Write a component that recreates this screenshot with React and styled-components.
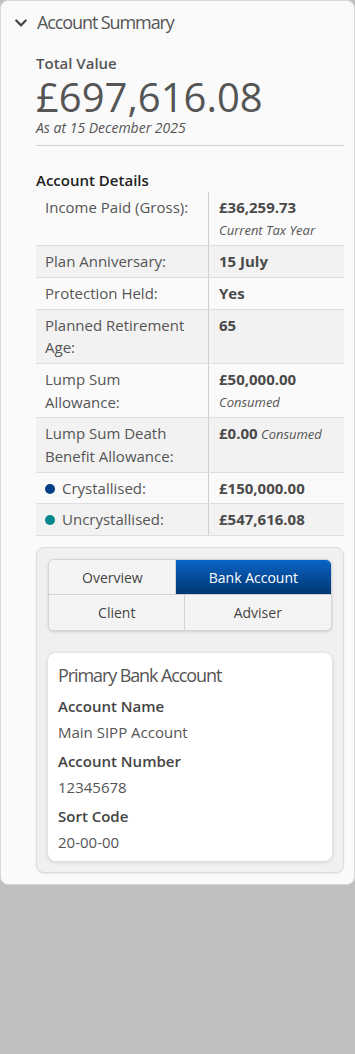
import React, { useState } from "react";
import styled, { createGlobalStyle } from "styled-components";
import { FaChevronDown } from "react-icons/fa";

const GlobalStyle = createGlobalStyle`
  body {
    margin: 0;
    background-color: #c0c0c0;
    font-family: "Open Sans", "Liberation Sans", sans-serif;
    color: #555;
  }
  * {
    box-sizing: border-box;
  }
`;

const Panel = styled.section`
  background-color: #fafafa;
  border: 1px solid #d8d8d8;
  border-radius: 8px;
`;

const Header = styled.div`
  display: flex;
  align-items: center;
  gap: 9px;
  height: 43px;
  padding-left: 13px;
  color: #444;
`;

const Title = styled.h2`
  margin: 0 0 2px;
  font-size: 18px;
  font-weight: 400;
  letter-spacing: -1.1px;
  color: #555;
`;

const Body = styled.div`
  padding: 9px 10px 11px 35px;
`;

const SectionLabel = styled.div`
  font-size: 15px;
  font-weight: 600;
  line-height: ${(p) => p.$lh || 20}px;
  color: ${(p) => p.$color || "#555"};
  margin-top: ${(p) => p.$gap || 0}px;
`;

const BigValue = styled.div`
  margin-top: 1px;
  font-size: 40px;
  font-weight: 400;
  line-height: 46px;
  color: #555;
`;

const AsAt = styled.div`
  font-size: 14px;
  font-style: italic;
  line-height: 16px;
  color: #555;
`;

const Divider = styled.hr`
  margin: 9px 0 0;
  border: none;
  border-top: 1px solid #cfcfcf;
`;

const DetailsTable = styled.div`
  display: flex;
  flex-direction: column;
  border-bottom: 1px solid #dedede;
`;

const Row = styled.div`
  display: grid;
  grid-template-columns: 173px 1fr;
  background-color: ${(p) => (p.$striped ? "#f2f2f2" : "transparent")};
  border-top: ${(p) => (p.$first ? "none" : "1px solid #dedede")};
  font-size: 15px;
  line-height: 22.65px;
`;

const LabelCell = styled.div`
  display: flex;
  align-items: flex-start;
  gap: 7px;
  padding: 4px 18px 4px 9px;
  border-right: 1px solid #cfcfcf;
  color: #555;
`;

const ValueCell = styled.div`
  padding: 4px 10px;
  font-weight: 700;
  color: #4a4a4a;
`;

const Note = styled.span`
  display: ${(p) => (p.$block ? "block" : "inline")};
  font-size: 13px;
  font-weight: 400;
  font-style: italic;
  line-height: 22.65px;
  color: #555;
`;

const Dot = styled.span`
  flex: none;
  width: 10px;
  height: 10px;
  margin-top: 7px;
  border-radius: 50%;
  background-color: ${(p) => p.$color};
`;

const TabsPanel = styled.div`
  margin-top: 11px;
  padding: 11px;
  background-color: #f0f0f0;
  border: 1px solid #dcdcdc;
  border-radius: 8px;
  box-shadow: 0 1px 2px rgba(0, 0, 0, 0.08);
`;

const TabGroup = styled.div`
  display: flex;
  flex-wrap: wrap;
  overflow: hidden;
  background-color: #f4f4f4;
  border: 1px solid #d4d4d4;
  border-radius: 6px;
  box-shadow: 0 1px 3px rgba(0, 0, 0, 0.14);
`;

const Tab = styled.button`
  flex: 1 1 auto;
  height: 36px;
  margin: -1px 0 0 -1px;
  padding: 0 30px;
  border: none;
  border-left: 1px solid #d2d2d2;
  border-top: 1px solid #d2d2d2;
  font-family: inherit;
  font-size: 14px;
  color: ${(p) => (p.$active ? "#fff" : "#444")};
  background: ${(p) =>
    p.$active ? "linear-gradient(#0a64c6, #00346f)" : "#f4f4f4"};
  cursor: pointer;
`;

const BankCard = styled.div`
  margin-top: 22px;
  padding: 9px 10px 8px;
  background-color: #fff;
  border-radius: 8px;
  box-shadow: 0 1px 4px rgba(0, 0, 0, 0.16);
`;

const CardTitle = styled.h3`
  margin: 0;
  font-size: 18px;
  font-weight: 400;
  letter-spacing: -1.1px;
  line-height: 26px;
  color: #555;
`;

const FieldLabel = styled.div`
  margin-top: 7px;
  font-size: 15px;
  font-weight: 600;
  line-height: 22px;
  color: #444;
`;

const FieldValue = styled.div`
  margin-top: 4px;
  font-size: 15px;
  line-height: 22px;
  color: #555;
`;

const details = [
  { label: "Income Paid (Gross):", value: "£36,259.73", note: "Current Tax Year", block: true },
  { label: "Plan Anniversary:", value: "15 July" },
  { label: "Protection Held:", value: "Yes" },
  { label: "Planned Retirement Age:", value: "65" },
  { label: "Lump Sum Allowance:", value: "£50,000.00", note: "Consumed", block: true },
  { label: "Lump Sum Death Benefit Allowance:", value: "£0.00", note: "Consumed" },
  { label: "Crystallised:", value: "£150,000.00", dot: "#003e86" },
  { label: "Uncrystallised:", value: "£547,616.08", dot: "#00888c" },
];

const tabs = ["Overview", "Bank Account", "Client", "Adviser"];

const App = () => {
  const [active, setActive] = useState("Bank Account");

  return (
    <>
      <GlobalStyle />
      <Panel>
        <Header>
          <FaChevronDown size={14} />
          <Title>Account Summary</Title>
        </Header>
        <Body>
          <SectionLabel>Total Value</SectionLabel>
          <BigValue>£697,616.08</BigValue>
          <AsAt>As at 15 December 2025</AsAt>
          <Divider />
          <SectionLabel $color="#222" $gap={23} $lh={23}>
            Account Details
          </SectionLabel>
          <DetailsTable>
            {details.map((d, i) => (
              <Row key={d.label} $first={i === 0} $striped={i % 2 === 1}>
                <LabelCell>
                  {d.dot && <Dot $color={d.dot} />}
                  <span>{d.label}</span>
                </LabelCell>
                <ValueCell>
                  {d.value}
                  {d.note && (
                    <Note $block={d.block}>
                      {d.block ? "" : " "}
                      {d.note}
                    </Note>
                  )}
                </ValueCell>
              </Row>
            ))}
          </DetailsTable>
          <TabsPanel>
            <TabGroup>
              {tabs.map((t) => (
                <Tab key={t} $active={t === active} onClick={() => setActive(t)}>
                  {t}
                </Tab>
              ))}
            </TabGroup>
            <BankCard>
              <CardTitle>Primary Bank Account</CardTitle>
              <FieldLabel>Account Name</FieldLabel>
              <FieldValue>Main SIPP Account</FieldValue>
              <FieldLabel>Account Number</FieldLabel>
              <FieldValue>12345678</FieldValue>
              <FieldLabel>Sort Code</FieldLabel>
              <FieldValue>20-00-00</FieldValue>
            </BankCard>
          </TabsPanel>
        </Body>
      </Panel>
    </>
  );
};

export default App;
